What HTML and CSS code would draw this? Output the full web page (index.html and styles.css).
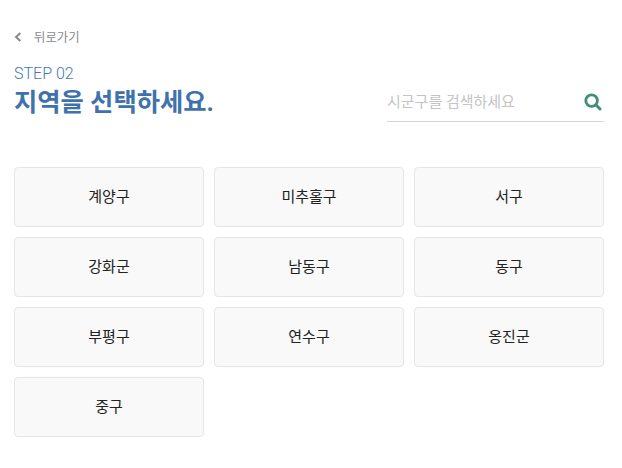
FILE: index.html
```html
<!DOCTYPE html>
<html lang="ko">
  <head>
    <meta charset="UTF-8" />
    <meta name="viewport" content="width=device-width, initial-scale=1.0" />
    <title>지역 선택</title>
    <link rel="stylesheet" href="styles.css">
  </head>
  <body>
    <a class="back-link" href="#">
      <svg class="back-icon" viewBox="0 0 8 10" width="8" height="10"><path d="M6.4 1 L2 5 L6.4 9" fill="none" stroke="#8a8a8a" stroke-width="2"/></svg>
      <span>뒤로가기</span>
    </a>
    <div class="head">
      <div class="title-box">
        <div class="step">STEP 02</div>
        <h1>지역을 선택하세요.</h1>
      </div>
      <div class="search">
        <input type="text" placeholder="시군구를 검색하세요" />
        <svg class="search-icon" viewBox="0 0 18 18" width="18" height="18"><circle cx="7.6" cy="7.6" r="5.8" fill="none" stroke="#3f8f76" stroke-width="2.8"/><path d="M12 12 L16 16" stroke="#3f8f76" stroke-width="3" stroke-linecap="round"/></svg>
      </div>
    </div>
    <div class="region-grid">
      <button class="region">계양구</button>
      <button class="region">미추홀구</button>
      <button class="region">서구</button>
      <button class="region">강화군</button>
      <button class="region">남동구</button>
      <button class="region">동구</button>
      <button class="region">부평구</button>
      <button class="region">연수구</button>
      <button class="region">옹진군</button>
      <button class="region">중구</button>
    </div>
  </body>
</html>
```

FILE: styles.css
```css
body {
  font-family: Roboto, "Noto Sans CJK KR", sans-serif;
  background-color: #fff;
  margin: 0;
  padding: 28px 18px 0 14px;
}

.back-link {
  display: flex;
  align-items: center;
  gap: 12px;
  height: 17px;
  color: #8a8a8a;
  font-size: 12.4px;
  text-decoration: none;
}

.head {
  display: flex;
  justify-content: space-between;
  margin-top: 20px;
}

.step {
  color: #4278b2;
  font-size: 16px;
  font-weight: 300;
  line-height: 18px;
}

h1 {
  margin: 6px 0 0;
  color: #3f72ad;
  font-size: 25.3px;
  font-weight: 700;
  line-height: 28px;
}

.search {
  display: flex;
  align-items: center;
  justify-content: space-between;
  box-sizing: border-box;
  width: 217px;
  height: 40px;
  margin-top: 17px;
  padding-right: 2px;
  border-bottom: 1px solid #d5d5d5;
}

.search input {
  width: 180px;
  padding: 0;
  border: 0;
  outline: 0;
  font-family: inherit;
  font-size: 15px;
}

.search input::placeholder {
  color: #c4c4c4;
}

.region-grid {
  display: grid;
  grid-template-columns: repeat(3, 190px);
  grid-auto-rows: 60px;
  gap: 10px;
  margin-top: 45px;
}

.region {
  padding: 0 0 4px;
  background-color: #f9f9f9;
  border: 1px solid #e6e6e6;
  border-radius: 4px;
  color: #222;
  font-family: inherit;
  font-size: 15px;
}
```
